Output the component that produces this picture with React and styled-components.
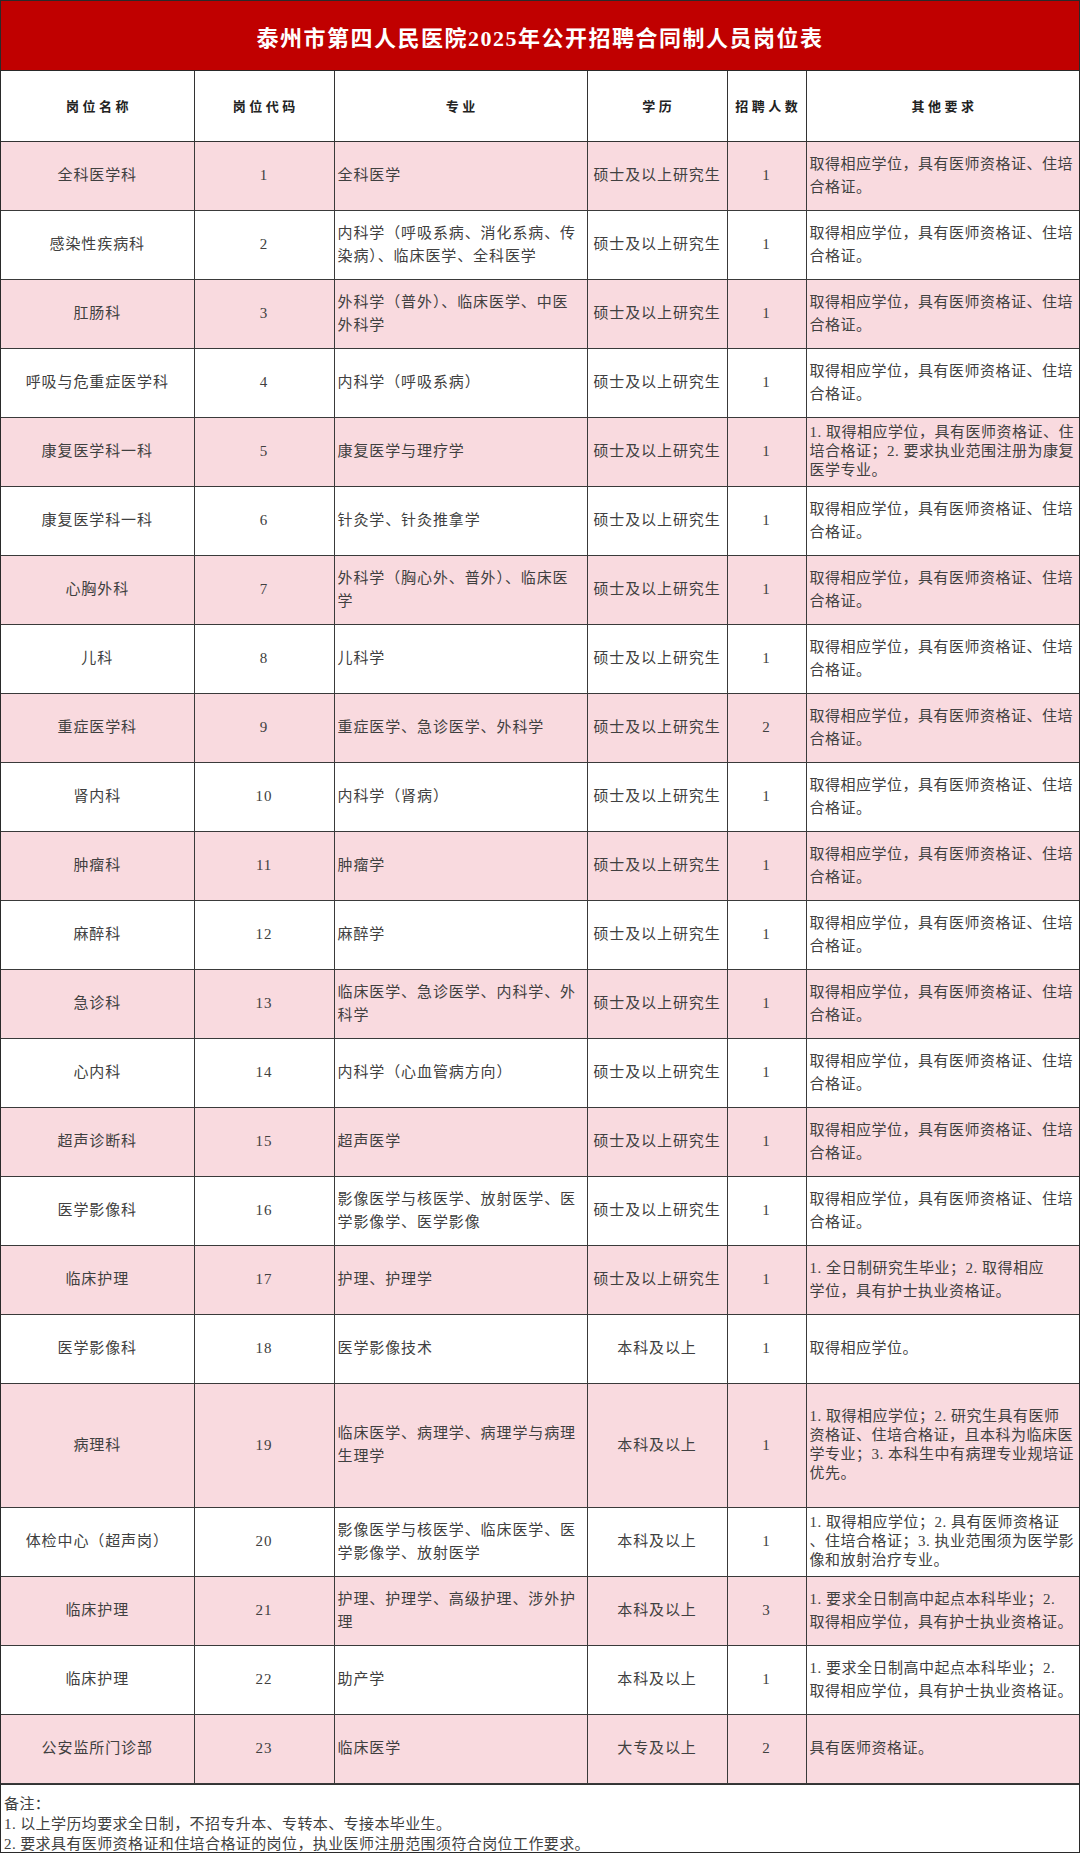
import React from "react";
import styled, { createGlobalStyle } from "styled-components";

const SAME = ["取得相应学位，具有医师资格证、住培", "合格证。"];
const NURSE = ["1. 要求全日制高中起点本科毕业；2.", "取得相应学位，具有护士执业资格证。"];
const MS = "硕士及以上研究生";
const BK = "本科及以上";

const rows = [
  ["全科医学科", "1", ["全科医学"], MS, "1", SAME],
  ["感染性疾病科", "2", ["内科学（呼吸系病、消化系病、传", "染病）、临床医学、全科医学"], MS, "1", SAME],
  ["肛肠科", "3", ["外科学（普外）、临床医学、中医", "外科学"], MS, "1", SAME],
  ["呼吸与危重症医学科", "4", ["内科学（呼吸系病）"], MS, "1", SAME],
  ["康复医学科一科", "5", ["康复医学与理疗学"], MS, "1", ["1. 取得相应学位，具有医师资格证、住", "培合格证；2. 要求执业范围注册为康复", "医学专业。"]],
  ["康复医学科一科", "6", ["针灸学、针灸推拿学"], MS, "1", SAME],
  ["心胸外科", "7", ["外科学（胸心外、普外）、临床医", "学"], MS, "1", SAME],
  ["儿科", "8", ["儿科学"], MS, "1", SAME],
  ["重症医学科", "9", ["重症医学、急诊医学、外科学"], MS, "2", SAME],
  ["肾内科", "10", ["内科学（肾病）"], MS, "1", SAME],
  ["肿瘤科", "11", ["肿瘤学"], MS, "1", SAME],
  ["麻醉科", "12", ["麻醉学"], MS, "1", SAME],
  ["急诊科", "13", ["临床医学、急诊医学、内科学、外", "科学"], MS, "1", SAME],
  ["心内科", "14", ["内科学（心血管病方向）"], MS, "1", SAME],
  ["超声诊断科", "15", ["超声医学"], MS, "1", SAME],
  ["医学影像科", "16", ["影像医学与核医学、放射医学、医", "学影像学、医学影像"], MS, "1", SAME],
  ["临床护理", "17", ["护理、护理学"], MS, "1", ["1. 全日制研究生毕业；2. 取得相应", "学位，具有护士执业资格证。"]],
  ["医学影像科", "18", ["医学影像技术"], BK, "1", ["取得相应学位。"]],
  ["病理科", "19", ["临床医学、病理学、病理学与病理", "生理学"], BK, "1", ["1. 取得相应学位；2. 研究生具有医师", "资格证、住培合格证，且本科为临床医", "学专业；3. 本科生中有病理专业规培证", "优先。"], 124],
  ["体检中心（超声岗）", "20", ["影像医学与核医学、临床医学、医", "学影像学、放射医学"], BK, "1", ["1. 取得相应学位；2. 具有医师资格证", "、住培合格证；3. 执业范围须为医学影", "像和放射治疗专业。"]],
  ["临床护理", "21", ["护理、护理学、高级护理、涉外护", "理"], BK, "3", NURSE],
  ["临床护理", "22", ["助产学"], BK, "1", NURSE],
  ["公安监所门诊部", "23", ["临床医学"], "大专及以上", "2", ["具有医师资格证。"]],
];

const GlobalStyle = createGlobalStyle`
  body {
    margin: 0;
    background: #ffffff;
    font-family: "Liberation Serif", "Noto Sans CJK SC", serif;
  }
`;

const Page = styled.div`
  width: 1080px;
  height: 1853px;
  box-sizing: border-box;
  border: 1px solid #2a2a2a;
  overflow: hidden;
`;

const Title = styled.div`
  height: 69px;
  display: flex;
  align-items: center;
  justify-content: center;
  background: #c00000;
  color: #ffffff;
  font-size: 22px;
  font-weight: 700;
  letter-spacing: 1.5px;
  border-bottom: 1px solid #2a2a2a;
`;

const Table = styled.table`
  width: 1078px;
  table-layout: fixed;
  border-collapse: collapse;
`;

const Row = styled.tr`
  height: ${(p) => p.$h}px;
  background: ${(p) => (p.$pink ? "#f9dadf" : "#ffffff")};
`;

const HeadCell = styled.th`
  border: 1px solid #333333;
  border-top: none;
  font-size: 13px;
  font-weight: 700;
  letter-spacing: 3.5px;
  padding: 0 0 0 3.5px;
  color: #222222;
  text-align: center;
  &:first-child { border-left: none; }
  &:last-child { border-right: none; }
`;

const Cell = styled.td`
  border: 1px solid #3a3a3a;
  padding: 0 0 0 ${(p) => (p.$left ? "3px" : "0")};
  font-size: 15px;
  letter-spacing: ${(p) => (p.$tight ? "0.5px" : "0.9px")};
  color: #404040;
  text-align: ${(p) => (p.$left ? "left" : "center")};
  vertical-align: middle;
  white-space: nowrap;
  overflow: hidden;
  line-height: ${(p) => (p.$lines >= 3 ? "19px" : "23px")};
  &:first-child { border-left: none; }
  &:last-child { border-right: none; }
`;

const Line = styled.div``;

const Notes = styled.div`
  border-top: 1px solid #333333;
  padding: 9px 0 0 3px;
  font-size: 15px;
  line-height: 20px;
  color: #404040;
  letter-spacing: 0.4px;
`;

function Lines({ items, left, tight }) {
  return (
    <Cell $left={left} $tight={tight} $lines={items.length}>
      {items.map((t, i) => (
        <Line key={i}>{t}</Line>
      ))}
    </Cell>
  );
}

export default function App() {
  return (
    <>
      <GlobalStyle />
      <Page>
        <Title>泰州市第四人民医院2025年公开招聘合同制人员岗位表</Title>
        <Table>
          <colgroup>
            <col style={{ width: 193 }} />
            <col style={{ width: 140 }} />
            <col style={{ width: 253 }} />
            <col style={{ width: 140 }} />
            <col style={{ width: 79 }} />
            <col style={{ width: 273 }} />
          </colgroup>
          <thead>
            <Row $h={70}>
              <HeadCell>岗位名称</HeadCell>
              <HeadCell>岗位代码</HeadCell>
              <HeadCell>专业</HeadCell>
              <HeadCell>学历</HeadCell>
              <HeadCell>招聘人数</HeadCell>
              <HeadCell>其他要求</HeadCell>
            </Row>
          </thead>
          <tbody>
            {rows.map((r, i) => (
              <Row key={r[1]} $h={r[6] || 69} $pink={i % 2 === 0}>
                <Lines items={[r[0]]} />
                <Lines items={[r[1]]} />
                <Lines items={r[2]} left />
                <Lines items={[r[3]]} />
                <Lines items={[r[4]]} />
                <Lines items={r[5]} left tight />
              </Row>
            ))}
          </tbody>
        </Table>
        <Notes>
          <Line>备注：</Line>
          <Line>1. 以上学历均要求全日制，不招专升本、专转本、专接本毕业生。</Line>
          <Line>2. 要求具有医师资格证和住培合格证的岗位，执业医师注册范围须符合岗位工作要求。</Line>
        </Notes>
      </Page>
    </>
  );
}
